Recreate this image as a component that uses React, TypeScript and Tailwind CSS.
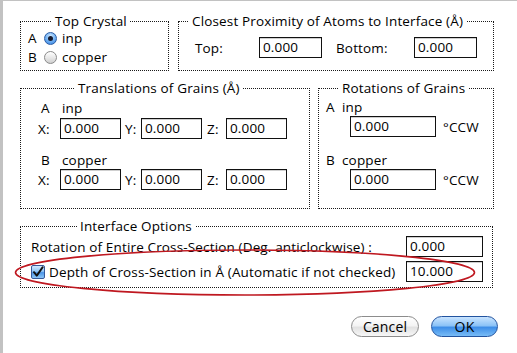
import type { ReactNode } from 'react'

function Group({ title, legendClass, className, children }: { title: string; legendClass: string; className: string; children: ReactNode }) {
  return (
    <fieldset className={`border border-dotted border-[#1a1a1a] ${className}`}>
      <legend className={`px-[3px] leading-[16px] ${legendClass}`}>{title}</legend>
      {children}
    </fieldset>
  )
}

function Field({ value, className }: { value: string; className: string }) {
  return (
    <div className={`h-[21px] border border-[#111] bg-white pl-[3px] leading-[19px] shadow-[inset_0_1px_0_#cfcfcf] ${className}`}>
      {value}
    </div>
  )
}

function Radio({ on }: { on?: boolean }) {
  if (on) {
    return (
      <div className="flex h-[13px] w-[13px] items-center justify-center rounded-full border border-[#2b5da6] bg-[radial-gradient(circle_at_50%_30%,#d4ebff_0%,#7cb8f5_45%,#2f7fe0_100%)]">
        <div className="h-[5px] w-[5px] rounded-full bg-[#151a2e]" />
      </div>
    )
  }
  return <div className="h-[13px] w-[13px] rounded-full border border-[#8a8a8a] bg-[linear-gradient(#ffffff,#e6e6e6_55%,#cfcfcf)]" />
}

function AquaButton({ label, primary }: { label: string; primary?: boolean }) {
  return (
    <div
      className={
        primary
          ? 'flex h-[21px] w-[67px] items-center justify-center rounded-full border border-[#22539f] bg-[linear-gradient(#c9e4ff_0%,#8cc3f7_45%,#3e8ee8_55%,#78bcf6_100%)] text-[14px]'
          : 'flex h-[21px] w-[68px] items-center justify-center rounded-full border border-[#8c8c8c] bg-[linear-gradient(#ffffff_0%,#f4f4f4_45%,#e2e2e2_55%,#f7f7f7_100%)] text-[14px]'
      }
    >
      {label}
    </div>
  )
}

export default function App() {
  return (
    <div className="relative h-[353px] w-[517px] overflow-hidden border-l-[3px] border-t border-[#c2c2c2] bg-white pt-[12px] font-['Lucida_Grande','Open_Sans',sans-serif] text-[13.5px] leading-[16px] tracking-[0.15px] text-black">
      {/* top row */}
      <div className="flex gap-[9px] pl-[17px]">
        <Group title="Top Crystal" legendClass="ml-[31px]" className="h-[58px] w-[149px]">
          <div className="flex flex-col gap-[3px] pl-[7px] pt-[1px]">
            <div className="flex h-[16px] items-center">
              <span className="w-[16px]">A</span>
              <Radio on />
              <span className="ml-[5px]">inp</span>
            </div>
            <div className="flex h-[16px] items-center">
              <span className="w-[16px]">B</span>
              <Radio />
              <span className="ml-[5px]">copper</span>
            </div>
          </div>
        </Group>
        <Group title="Closest Proximity of Atoms to Interface (Å)" legendClass="ml-[10px]" className="h-[58px] w-[316px]">
          <div className="flex items-center pl-[16px] pt-[8px]">
            <span className="w-[64px]">Top:</span>
            <Field value="0.000" className="w-[63px]" />
            <span className="ml-[14px] w-[78px]">Bottom:</span>
            <Field value="0.000" className="w-[63px]" />
          </div>
        </Group>
      </div>

      {/* grains row */}
      <div className="mt-[9px] flex gap-[8px] pl-[17px]">
        <Group title="Translations of Grains (Å)" legendClass="ml-[54px]" className="h-[129px] w-[290px]">
          <div className="flex flex-col pt-[4px]">
            {[
              ['A', 'inp', 'mt-[0px]'],
              ['B', 'copper', 'mt-[13px]'],
            ].map(([k, name, mt]) => (
              <div key={k} className={mt}>
                <div className="flex h-[16px] items-center pl-[20px]">
                  <span className="w-[21px]">{k}</span>
                  <span>{name}</span>
                </div>
                <div className={`flex items-center pl-[17px] ${k === 'A' ? 'mt-[2px]' : 'mt-[1px]'}`}>
                  <span className="w-[22px]">X:</span>
                  <Field value="0.000" className="w-[61px]" />
                  <span className="ml-[4px] w-[16px]">Y:</span>
                  <Field value="0.000" className="w-[61px]" />
                  <span className="ml-[5px] w-[19px]">Z:</span>
                  <Field value="0.000" className="w-[61px]" />
                </div>
              </div>
            ))}
          </div>
        </Group>
        <Group title="Rotations of Grains" legendClass="ml-[20px]" className="h-[129px] w-[176px]">
          <div className="flex flex-col pt-[3px]">
            {[
              ['A', 'inp', 'mt-[0px]'],
              ['B', 'copper', 'mt-[15px]'],
            ].map(([k, name, mt]) => (
              <div key={k} className={mt}>
                <div className="flex h-[16px] items-center pl-[7px]">
                  <span className="w-[16px]">{k}</span>
                  <span>{name}</span>
                </div>
                <div className="mt-[1px] flex items-center pl-[31px]">
                  <Field value="0.000" className="w-[86px]" />
                  <span className="ml-[7px]">°CCW</span>
                </div>
              </div>
            ))}
          </div>
        </Group>
      </div>

      {/* interface options */}
      <div className="mt-[9px] pl-[17px]">
        <Group title="Interface Options" legendClass="ml-[56px]" className="h-[70px] w-[473px]">
          <div className="flex flex-col gap-[4px] pl-[10px] pt-[2px]">
            <div className="flex items-center">
              <span className="w-[375px]">Rotation of Entire Cross-Section (Deg. anticlockwise) :</span>
              <Field value="0.000" className="w-[77px]" />
            </div>
            <div className="flex items-center">
              <div className="flex w-[375px] items-center">
                <div className="flex h-[14px] w-[14px] items-center justify-center rounded-[2px] border border-[#34589a] bg-[linear-gradient(#d3e9ff_0%,#8ec4f6_45%,#4b95e6_55%,#8cc6f7_100%)]">
                  <svg width="12" height="12" viewBox="0 0 12 12">
                    <path d="M2 6.2 L4.8 9.6 L10.6 1.2" fill="none" stroke="#111" strokeWidth="2" strokeLinecap="round" strokeLinejoin="round" />
                  </svg>
                </div>
                <span className="ml-[4px]">Depth of Cross-Section in Å (Automatic if not checked)</span>
              </div>
              <Field value="10.000" className="w-[77px]" />
            </div>
          </div>
        </Group>
      </div>

      {/* buttons */}
      <div className="mt-[28px] flex justify-end gap-[12px] pr-[19px]">
        <AquaButton label="Cancel" />
        <AquaButton label="OK" primary />
      </div>

      {/* red annotation */}
      <svg className="absolute left-[10px] top-[247px]" width="464" height="50" viewBox="0 0 464 50">
        <ellipse cx="232" cy="24.5" rx="229.5" ry="22.5" fill="none" stroke="#bf1820" strokeWidth="1.6" />
      </svg>
    </div>
  )
}
